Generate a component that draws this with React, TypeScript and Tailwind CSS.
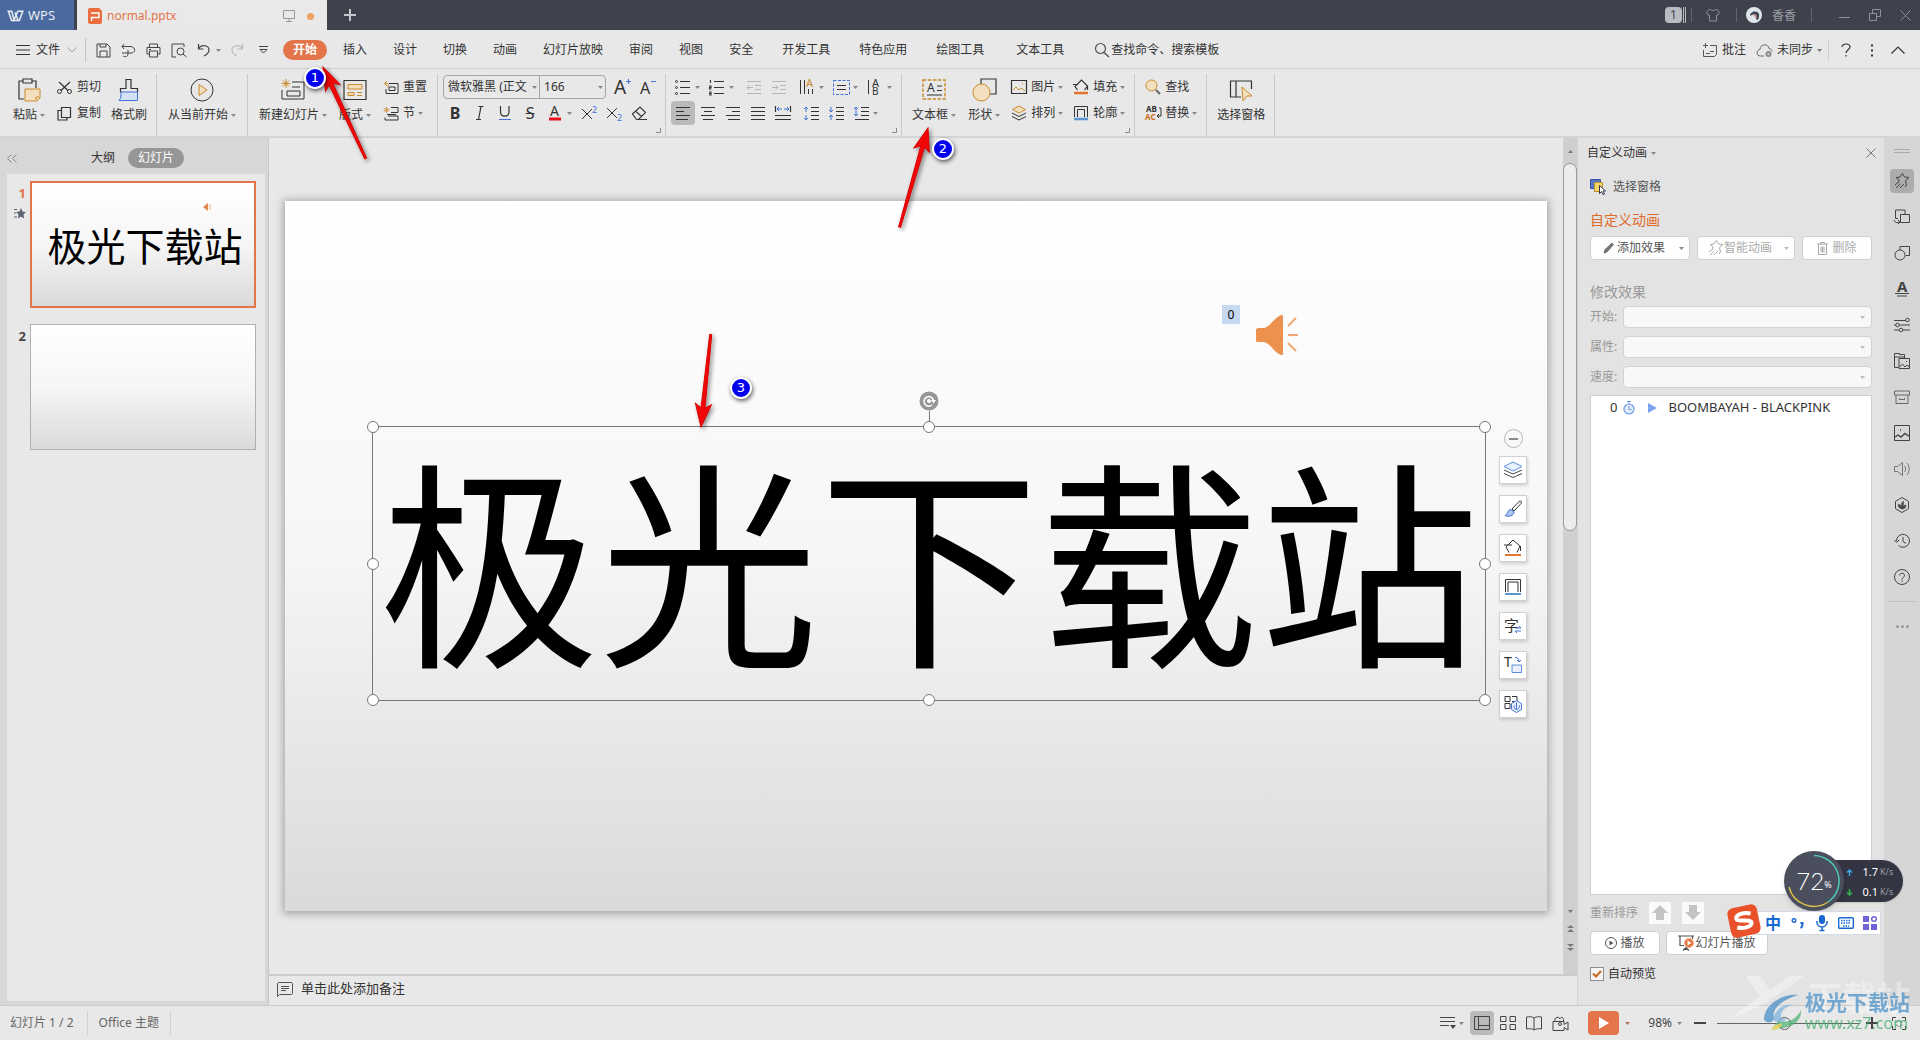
import React from 'react';

type IconProps = { w?: number; h?: number; className?: string; children: React.ReactNode };

const BLUE = '#4472d8';
const GOLD = '#c98a2e';

function Icon({ w = 16, h, className = '', children }: IconProps) {
  const height = h ?? w;
  return (
    <svg
      width={w}
      height={height}
      viewBox={`0 0 ${w} ${height}`}
      fill="none"
      stroke="currentColor"
      className={`shrink-0 overflow-visible ${className}`}
      aria-hidden="true"
    >
      {children}
    </svg>
  );
}

function Caret({ className = 'text-[#888]' }: { className?: string }) {
  return (
    <Icon w={5} h={3} className={className}>
      <path d="M0 0h5L2.500 3z" fill="currentColor" stroke="none" />
    </Icon>
  );
}

// letter that is part of an icon
function Letter({ x, y, size, color = 'currentColor', weight = 400, children }: { x: number; y: number; size: number; color?: string; weight?: number; children: string }) {
  return (
    <text x={x} y={y} fontSize={size} fill={color} fontWeight={weight} stroke="none">
      {children}
    </text>
  );
}

/* ---------- Title bar ---------- */

function TitleBar() {
  return (
    <header className="flex h-[30px] shrink-0 items-center bg-[#3f424d] text-xs text-[#c4c6cc]">
      <button className="flex h-full w-[74px] items-center gap-1 bg-[#4a6a9f] pt-[2px] pl-[7px] text-[13px] text-[#e8edf5]">
        <Icon w={17} h={12}>
          <path d="M.5 1.200h4.300L7 10l3.800-8.800h5L12.300 10.500H7.500" strokeWidth="1.500" />
          <path d="M1.500 1.500l3 9H7M8 2.500l3 7.500" strokeWidth="1.500" />
        </Icon>
        WPS
      </button>
      <div className="ml-[3px] flex h-full w-[250px] items-center bg-[#e9e9e9] pt-[2px] pr-[13px] pl-[11px] text-[#e4744a]">
        <Icon w={14} h={16}>
          <path d="M2 0h9l3 3v11a2 2 0 0 1-2 2H2a2 2 0 0 1-2-2V2a2 2 0 0 1 2-2z" fill="#ea6d3d" stroke="none" />
          <path d="M3 5h8v4.500H3.500V13" stroke="#fff" strokeWidth="1.400" />
        </Icon>
        <span className="ml-[5px] flex-1">normal.pptx</span>
        <Icon w={12} className="text-[#999]">
          <path d="M.5.5h11v8H.5zM6 8.500v3M3 11.500h6" />
        </Icon>
        <span className="ml-3 size-[7px] rounded-full bg-[#f0a060]" />
      </div>
      <button aria-label="新建标签" className="ml-[17px]">
        <Icon w={12}>
          <path d="M6 0v12M0 6h12" strokeWidth="2" />
        </Icon>
      </button>
      <div className="ml-auto flex h-full items-center">
        <span className="flex h-4 w-[17px] items-center justify-center rounded-sm bg-[#b9bbc2] text-[#3f424d]">1</span>
        <span className="ml-px h-4 w-[3px] border-x border-[#b9bbc2]" />
        <span className="ml-[5px] h-[14px] w-px bg-[#62656f]" />
        <button aria-label="皮肤" className="ml-[14px] text-[#8e9098]">
          <Icon w={14}>
            <path d="M4 1 .5 4l1.500 3h1.500v6h7V7H12l1.500-3L10 1C9 3 5 3 4 1z" />
          </Icon>
        </button>
        <span className="ml-4 h-[14px] w-px bg-[#62656f]" />
        <Icon w={16} className="ml-[9px]">
          <circle cx="8" cy="8" r="8" fill="#dfe6ea" stroke="none" />
          <path d="M4 9c0-4 5-6 8-3.500 2 2 1 5 0 7.500-2 0-2-2-2-4-1-2-3-2-6 0z" fill="#3b4250" stroke="none" />
          <path d="M7 8l2-1 2 2-1 2z" fill="#d9958b" stroke="none" />
        </Icon>
        <span className="ml-[10px] pt-[2px] text-[#9c9ea6]">香香</span>
        <span className="ml-[15px] h-[14px] w-px bg-[#62656f]" />
        <button aria-label="最小化" className="ml-[27px] text-[#8e9098]">
          <Icon w={11}>
            <path d="M0 7.500h11" />
          </Icon>
        </button>
        <button aria-label="还原" className="ml-[19px] text-[#8e9098]">
          <Icon w={12}>
            <path d="M.5 4.500h7v7h-7zM3.500 4V.5h8v7H8" />
          </Icon>
        </button>
        <button aria-label="关闭" className="mr-[9px] ml-[19px] text-[#8e9098]">
          <Icon w={11}>
            <path d="M.5.5l10 10M10.500.5l-10 10" />
          </Icon>
        </button>
      </div>
    </header>
  );
}

/* ---------- Menu bar ---------- */

const menuTabs = ['插入', '设计', '切换', '动画', '幻灯片放映', '审阅', '视图', '安全'];
const toolTabs = ['开发工具', '特色应用', '绘图工具'];

function MenuBar() {
  return (
    <nav className="flex h-[39px] shrink-0 items-center border-b border-[#cfcfcf] pt-[2px] whitespace-nowrap">
      <button className="ml-4 flex items-center gap-[6px]">
        <Icon w={14} h={10}>
          <path d="M0 .5h14M0 5h14M0 9.500h14" />
        </Icon>
        文件
        <Icon w={10} h={6} className="ml-px text-[#999]">
          <path d="M.5.5L5 5l4.500-4.500" />
        </Icon>
      </button>
      <span className="ml-2 h-6 w-px bg-[#c4c4c4]" />
      <div className="ml-[10px] flex items-center gap-[10px] text-[#444]">
        <button aria-label="保存">
          <Icon w={15}>
            <path d="M1 1h10l3 3v10H1zM4 1v3h6V1M4 14V8h7v6" />
          </Icon>
        </button>
        <button aria-label="输出为PDF">
          <Icon w={15}>
            <path d="M1 3.500h8c6 0 6 6.500 1 6.500H7M7 7v4c0 3-3 3-5 2M1 10h6M3 1L1 3.500 3 6" />
          </Icon>
        </button>
        <button aria-label="打印">
          <Icon w={15}>
            <path d="M3.500 4V1h8v3M3 11H1V4.500h13V11h-2M3.500 8h8v6h-8zM3 6.500h2" />
          </Icon>
        </button>
        <button aria-label="打印预览">
          <Icon w={16} h={15}>
            <path d="M5 14H1V1h12v3" />
            <circle cx="9.500" cy="8.500" r="3.500" />
            <path d="M12 11l3.500 3" />
          </Icon>
        </button>
        <button aria-label="撤销" className="flex items-center gap-[6px]">
          <Icon w={13} h={14}>
            <path d="M1.500 1v5h5M1.500 6C4 1 12 2 12 7c0 3-3 5-5 6" strokeWidth="1.200" />
          </Icon>
          <Caret />
        </button>
        <button aria-label="恢复" className="text-[#bbb]">
          <Icon w={13} h={14}>
            <path d="M11.500 1v5h-5M11.500 6C9 1 1 2 1 7c0 3 3 5 5 6" strokeWidth="1.200" />
          </Icon>
        </button>
        <button aria-label="自定义快速访问工具栏" className="ml-[5px]">
          <Icon w={9} h={8}>
            <path d="M0 .5h9M1 3.500h7L4.500 7z" />
          </Icon>
        </button>
      </div>
      <button className="ml-[15px] h-5 w-11 rounded-full bg-[#e4754a] font-bold text-white">开始</button>
      <div className="ml-4 flex items-center gap-[26px]">
        {menuTabs.map((t) => (
          <button key={t}>{t}</button>
        ))}
      </div>
      <div className="ml-[29px] flex items-center gap-[29px]">
        {toolTabs.map((t) => (
          <button key={t}>{t}</button>
        ))}
      </div>
      <div className="ml-8 flex items-center gap-[30px]">
        <button>文本工具</button>
        <button className="flex items-center gap-px">
          <Icon w={16} className="text-[#555]">
            <circle cx="6.500" cy="6.500" r="5" strokeWidth="1.200" />
            <path d="M10 10.500l5 4.500" strokeWidth="1.500" />
          </Icon>
          查找命令、搜索模板
        </button>
      </div>
      <div className="ml-auto flex items-center">
        <button className="flex items-center gap-1">
          <Icon w={16} h={15} className="text-[#555]">
            <path d="M3.500 0v5M1 2.500h5M8 2.500h6.500v9l-2 2H1.500V7M4 10.500h4M8 8.500h4" />
          </Icon>
          批注
        </button>
        <button className="ml-[10px] flex items-center gap-[3px]">
          <Icon w={18} h={15} className="text-[#666]">
            <path d="M8 13H4.500C0 13 0 7 4 6.500 4 1 12 0 13 5.500c2 .5 3 1.500 3 3" />
            <circle cx="12.500" cy="11" r="3" fill="#888" stroke="none" />
            <path d="M11.500 10l2 2M13.500 10l-2 2" stroke="#eee" strokeWidth=".8" />
          </Icon>
          未同步
          <Caret className="ml-px text-[#777]" />
        </button>
        <span className="ml-[6px] h-5 w-px bg-[#cfcfcf]" />
        <button aria-label="帮助" className="ml-3">
          <Icon w={10} h={14}>
            <path d="M1 4c0-4 8-4 8 0 0 2.500-4 3-4 6M5 12v1.500" strokeWidth="1.200" />
          </Icon>
        </button>
        <button aria-label="更多" className="ml-5">
          <Icon w={3} h={13}>
            <path d="M0 1.500h2M0 6.500h2M0 11.500h2" strokeWidth="2" />
          </Icon>
        </button>
        <button aria-label="收起功能区" className="mr-[15px] ml-[17px]">
          <Icon w={14} h={8}>
            <path d="M.5 7.500L7 1l6.500 6.500" strokeWidth="1.200" />
          </Icon>
        </button>
      </div>
    </nav>
  );
}

/* ---------- Ribbon ---------- */

function BigButton({ icon, label, caret }: { icon: React.ReactNode; label: string; caret?: boolean }) {
  return (
    <button className="flex flex-col items-center gap-[5px] pt-[4px]">
      <span className="flex h-6 items-center">{icon}</span>
      <span className="flex h-4 items-center gap-[3px]">
        {label}
        {caret && <Caret />}
      </span>
    </button>
  );
}

function SmallButton({ icon, label, caret }: { icon: React.ReactNode; label: string; caret?: boolean }) {
  return (
    <button className="flex h-[26px] items-center gap-[3px]">
      <span className="flex w-[17px] items-center">{icon}</span>
      {label}
      {caret && <Caret />}
    </button>
  );
}

function Tool({ icon, label, caret, pressed }: { icon: React.ReactNode; label: string; caret?: boolean; pressed?: boolean }) {
  return (
    <button aria-label={label} title={label} className={`flex h-6 items-center ${caret ? 'w-[34px]' : 'w-[25px]'}`}>
      <span className={`flex h-6 w-6 shrink-0 items-center justify-center rounded ${pressed ? 'bg-[#bababa]' : ''}`}>{icon}</span>
      {caret && <Caret />}
    </button>
  );
}

function Launcher() {
  return (
    <button aria-label="更多选项" className="absolute right-1 bottom-[3px] text-[#888]">
      <Icon w={5}>
        <path d="M4.500 0v4.500H0" />
      </Icon>
    </button>
  );
}

const group = 'relative flex h-[62px] shrink-0 border-r border-[#c9c9c9]';

const lines = (d: string) => (
  <Icon w={16} h={14}>
    <path d={d} strokeWidth="1.200" />
  </Icon>
);

function Ribbon() {
  return (
    <div className="flex h-[69px] shrink-0 items-start border-b-2 border-[#d4d4d4] pt-[5px] whitespace-nowrap">
      <div className={`${group} pr-[9px] pl-[13px]`}>
        <BigButton
          label="粘贴"
          caret
          icon={
            <Icon w={24}>
              <path d="M6 3H2v18h5M15 3h4v7M6 1h9v4H6z" strokeWidth="1.200" />
              <path d="M8 11h15v9l-3 3H8z" fill="#f3dfbd" stroke={GOLD} />
              <path d="M19 22v-3h3" stroke={GOLD} />
            </Icon>
          }
        />
        <div className="ml-[12px]">
          <SmallButton
            label="剪切"
            icon={
              <Icon w={15} h={13}>
                <path d="M2 1l9 8.500M13 1L4 9.500" strokeWidth="1.200" />
                <circle cx="2.500" cy="10.500" r="2" />
                <circle cx="12.500" cy="10.500" r="2" />
              </Icon>
            }
          />
          <SmallButton
            label="复制"
            icon={
              <Icon w={15}>
                <path d="M4.500 1.500h9v10h-9zM4 4.500H1v9.500h9v-2" strokeWidth="1.200" />
              </Icon>
            }
          />
        </div>
        <div className="ml-[10px] flex">
          <BigButton
            label="格式刷"
            icon={
              <Icon w={22} h={24}>
                <path d="M2.500 14.500v-4H8V1.500h5v9h6.500v4" strokeWidth="1.200" />
                <path d="M3 14h16.500v8.500H1c2-2 2-5 2-8.500z" fill="#d4e0f3" stroke={BLUE} />
              </Icon>
            }
          />
        </div>
      </div>

      <div className={`${group} pr-[11px] pl-[11px]`}>
        <BigButton
          label="从当前开始"
          caret
          icon={
            <Icon w={24}>
              <circle cx="12" cy="12" r="11" />
              <path d="M9 6.500l8 5.500-8 5.500z" fill="#f3dfbd" stroke={GOLD} />
            </Icon>
          }
        />
      </div>

      <div className={`${group} gap-3 pr-[10px] pl-[11px]`}>
        <BigButton
          label="新建幻灯片"
          caret
          icon={
            <Icon w={26} h={24}>
              <path d="M12 4h12v17H2v-9M7 13h13v5H7zM12 9h8" />
              <path d="M6 1v9M1.500 5.500h9M3 2.500l6 6M9 2.500l-6 6" stroke={GOLD} />
            </Icon>
          }
        />
        <BigButton
          label="版式"
          caret
          icon={
            <Icon w={24}>
              <path d="M1 2.500h22v19H1z" strokeWidth="1.200" />
              <path d="M5 6.500h14v4.500H5zM5 14.500h6v3H5zM14 14.500h5M14 17.500h5" stroke={GOLD} fill="#f3dfbd" />
            </Icon>
          }
        />
        <div>
          <SmallButton
            label="重置"
            icon={
              <Icon w={16} h={15}>
                <path d="M6 3.500h9v10H3V9M6 7h6v3.500H6z" />
                <path d="M4 1L1.500 3.500 4 6M2 3.500h2c2 0 2 3 0 4" stroke={GOLD} />
              </Icon>
            }
          />
          <SmallButton
            label="节"
            caret
            icon={
              <Icon w={16} h={15}>
                <path d="M8 1.500h7v5H8M4 8.500h9M2 11.500v2.500h13v-4H5" />
                <path d="M3.500 1v6M.5 4h6M1.500 2l4 4M5.500 2l-4 4" stroke={GOLD} strokeWidth=".8" />
              </Icon>
            }
          />
        </div>
      </div>

      {/* Font */}
      <div className={`${group} w-[228px] flex-col pl-[5px]`}>
        <div className="flex h-[26px] items-center">
          <div className="flex h-6 w-[164px] items-center rounded border border-[#a5a5a5]">
            <select aria-label="字体" className="w-[88px] appearance-none pl-1 outline-none">
              <option>微软雅黑 (正文</option>
            </select>
            <Caret />
            <span className="ml-[2px] h-full w-px bg-[#a5a5a5]" />
            <select aria-label="字号" className="w-[58px] appearance-none pl-1 outline-none">
              <option>166</option>
            </select>
            <Caret />
          </div>
          <button aria-label="增大字号" className="ml-[8px] w-[26px]">
            <Icon w={18}>
              <Letter x={0} y={16} size={19}>A</Letter>
              <path d="M14.500 1v5M12 3.500h5" stroke={BLUE} />
            </Icon>
          </button>
          <button aria-label="减小字号" className="w-[26px]">
            <Icon w={18}>
              <Letter x={1} y={16} size={16}>A</Letter>
              <path d="M12 3.500h5" stroke={BLUE} />
            </Icon>
          </button>
        </div>
        <div className="flex h-[26px] items-center">
          <Tool label="加粗" icon={<span className="text-base leading-4 font-bold">B</span>} />
          <Tool
            label="倾斜"
            icon={
              <Icon w={12} h={14}>
                <path d="M4.500 .5h5M2 13.500h5M7 .5l-2.500 13" strokeWidth="1.200" />
              </Icon>
            }
          />
          <Tool
            label="下划线"
            icon={
              <Icon w={14} h={15}>
                <path d="M2.500 0v6c0 5.500 8.500 5.500 8.500 0V0" strokeWidth="1.200" />
                <path d="M1 13.500h12" stroke={BLUE} />
              </Icon>
            }
          />
          <Tool label="删除线" icon={<span className="text-base leading-4 line-through">S</span>} />
          <Tool
            label="字体颜色"
            caret
            icon={
              <Icon w={14} h={15}>
                <Letter x={2} y={10} size={14}>A</Letter>
                <path d="M1 13h12" stroke="#e8101a" strokeWidth="3" />
              </Icon>
            }
          />
          <Tool
            label="上标"
            icon={
              <Icon w={17} h={15}>
                <path d="M1 3l10 10M11 3L1 13" />
                <Letter x={11} y={7} size={9} color={BLUE}>2</Letter>
              </Icon>
            }
          />
          <Tool
            label="下标"
            icon={
              <Icon w={17} h={15}>
                <path d="M1 2l10 10M11 2L1 12" />
                <Letter x={11} y={15} size={9} color={BLUE}>2</Letter>
              </Icon>
            }
          />
          <Tool
            label="清除格式"
            icon={
              <Icon w={17} h={15}>
                <path d="M1.500 8l7.500-7 5.500 5.500-7 7H5.500zM4.500 5l6 5.500M6 13.500h10" strokeWidth="1.100" />
              </Icon>
            }
          />
        </div>
        <Launcher />
      </div>

      {/* Paragraph */}
      <div className={`${group} w-[236px] flex-col pl-[5px]`}>
        <div className="flex h-[26px] items-center">
          <Tool
            label="项目符号"
            caret
            icon={
              <Icon w={16} h={15}>
                <path d="M5 1.500h10M5 7.500h10M5 13.500h10" strokeWidth="1.200" />
                <circle cx="1.500" cy="1.500" r="1" />
                <circle cx="1.500" cy="7.500" r="1" />
                <circle cx="1.500" cy="13.500" r="1" />
              </Icon>
            }
          />
          <Tool
            label="编号"
            caret
            icon={
              <Icon w={16} h={15}>
                <path d="M5 1.500h10M5 7.500h10M5 13.500h10M1.500 0v3M0 6h2v1.500H.5V9h2M0 12h2v3H0M0 13.500h2" strokeWidth="1.100" />
              </Icon>
            }
          />
          <span className="w-[3px]" />
          <Tool
            label="减少缩进量"
            icon={
              <Icon w={16} h={13} className="text-[#b5b5b5]">
                <path d="M1 .5h14M9 4.500h6M9 8.500h6M1 12.500h14M7 6.500H1M3.500 4L1 6.500 3.500 9" />
              </Icon>
            }
          />
          <Tool
            label="增加缩进量"
            icon={
              <Icon w={16} h={13} className="text-[#b5b5b5]">
                <path d="M1 .5h14M9 4.500h6M9 8.500h6M1 12.500h14M1 6.500h6M4.500 4L7 6.500 4.500 9" />
              </Icon>
            }
          />
          <span className="w-[3px]" />
          <Tool
            label="文字方向"
            caret
            icon={
              <Icon w={16}>
                <path d="M1.500 1v14M5.500 1v14M9.500 10v5M13.500 10v5" />
                <Letter x={7} y={8} size={11} color={GOLD}>A</Letter>
              </Icon>
            }
          />
          <Tool
            label="对齐文本"
            caret
            icon={
              <Icon w={17} h={15}>
                <path d="M.5.5h16v14H.5z" stroke={BLUE} strokeDasharray="3 1.500" />
                <path d="M4 5.500h9M4 9.500h9" strokeWidth="1.200" />
              </Icon>
            }
          />
          <Tool
            label="竖排文字"
            caret
            icon={
              <Icon w={16}>
                <path d="M1.500 1v14" />
                <Letter x={5} y={8} size={11}>A</Letter>
                <Letter x={5} y={16} size={10}>B</Letter>
              </Icon>
            }
          />
        </div>
        <div className="flex h-[26px] items-center">
          <Tool label="左对齐" pressed icon={lines('M1 1.500h14M1 5.500h8M1 9.500h14M1 13.500h12')} />
          <Tool label="居中对齐" icon={lines('M1 1.500h14M4 5.500h8M1 9.500h14M3 13.500h10')} />
          <Tool label="右对齐" icon={lines('M1 1.500h14M7 5.500h8M1 9.500h14M3 13.500h12')} />
          <Tool label="两端对齐" icon={lines('M1 1.500h14M1 5.500h14M1 9.500h14M1 13.500h14')} />
          <Tool
            label="分散对齐"
            icon={
              <Icon w={16} h={14}>
                <path d="M.5 0v6M15.500 0v6M0 9.500h16M0 13.500h16" strokeWidth="1.200" />
                <path d="M2 3h5M4 1L2 3l2 2M14 3H9M12 1l2 2-2 2" stroke={BLUE} />
              </Icon>
            }
          />
          <span className="w-[3px]" />
          <Tool
            label="增大行距"
            icon={
              <Icon w={16} h={15}>
                <path d="M8 1.500h8M8 5.500h8M8 9.500h8M8 13.500h8" strokeWidth="1.200" />
                <path d="M3 1v5M1 3l2-2 2 2M3 9v5M1 12l2 2 2-2" stroke={BLUE} />
              </Icon>
            }
          />
          <Tool
            label="减小行距"
            icon={
              <Icon w={16} h={15}>
                <path d="M8 1.500h8M8 5.500h8M8 9.500h8M8 13.500h8" strokeWidth="1.200" />
                <path d="M3 1v5M1 4l2 2 2-2M3 9v5M1 11l2-2 2 2" stroke={BLUE} />
              </Icon>
            }
          />
          <Tool
            label="行距"
            caret
            icon={
              <Icon w={16} h={15}>
                <path d="M8 1.500h8M8 5.500h8M8 9.500h8M2 13.500h14" strokeWidth="1.200" />
                <path d="M3 1v9M1 3l2-2 2 2M1 8l2 2 2-2" stroke={BLUE} />
              </Icon>
            }
          />
        </div>
        <Launcher />
      </div>

      {/* Insert */}
      <div className={`${group} pr-[9px] pl-[10px]`}>
        <BigButton
          label="文本框"
          caret
          icon={
            <Icon w={24}>
              <path d="M1 2h22v19H1z" stroke={GOLD} strokeWidth="1.400" strokeDasharray="3.500 1.500" />
              <Letter x={5} y={14} size={12}>A</Letter>
              <path d="M15 8h5M15 12.500h5M5 17h15" />
            </Icon>
          }
        />
        <span className="w-3" />
        <BigButton
          label="形状"
          caret
          icon={
            <Icon w={25} h={24}>
              <path d="M9 6V1h15v15h-6" strokeWidth="1.200" />
              <circle cx="9.500" cy="14.500" r="8.500" fill="#f3dfbd" stroke={GOLD} />
            </Icon>
          }
        />
        <div className="ml-[11px]">
          <SmallButton
            label="图片"
            caret
            icon={
              <Icon w={16} h={14}>
                <path d="M.5.5h15v13H.5z" strokeWidth="1.200" />
                <path d="M2 10l3-3 3 3 2-2 4 3M11 4h1" stroke={GOLD} />
              </Icon>
            }
          />
          <SmallButton
            label="排列"
            caret
            icon={
              <Icon w={16}>
                <path d="M1.500 4.500L8 1l6.500 3.500L8 8z" fill="#f3dfbd" stroke={GOLD} />
                <path d="M1 8l7 3.500L15 8M1 11.500L8 15l7-3.500" />
              </Icon>
            }
          />
        </div>
        <div className="ml-[10px]">
          <SmallButton
            label="填充"
            caret
            icon={
              <Icon w={16}>
                <path d="M4.500 11L2 7.500 8.500 1l6 6-3 4M0 5.500h5M14.500 6.500v4.500" strokeWidth="1.200" />
                <path d="M1 14h14" stroke="#e0762f" strokeWidth="2.500" />
              </Icon>
            }
          />
          <SmallButton
            label="轮廓"
            caret
            icon={
              <Icon w={16}>
                <path d="M1.500 12V1.500h13V12M4.500 12V4.500h7V12" />
                <path d="M1 14h14" stroke="#5b97cf" strokeWidth="2.500" />
              </Icon>
            }
          />
        </div>
        <Launcher />
      </div>

      <div className={`${group} pr-[9px] pl-[10px]`}>
        <div>
          <SmallButton
            label="查找"
            icon={
              <Icon w={16}>
                <circle cx="6.500" cy="6.500" r="5.500" fill="#f3dfbd" stroke={GOLD} />
                <path d="M11 11l4 4" stroke="#666" strokeWidth="2" />
              </Icon>
            }
          />
          <SmallButton
            label="替换"
            caret
            icon={
              <Icon w={17} h={16}>
                <Letter x={1} y={7} size={8} weight={700}>AB</Letter>
                <Letter x={0} y={15} size={8} weight={700} color="#cf6f1c">AC</Letter>
                <path d="M14 3h2v8h-4M14 9l-2 2 2 2" />
              </Icon>
            }
          />
        </div>
      </div>

      <div className={`${group} pr-[9px] pl-[10px]`}>
        <BigButton
          label="选择窗格"
          icon={
            <Icon w={24}>
              <path d="M12 19H1.500V3h21v8M7 3v16" strokeWidth="1.200" />
              <path d="M13 9l10 9h-5l-4 5z" fill="#f3dfbd" stroke={GOLD} />
            </Icon>
          }
        />
      </div>
    </div>
  );
}

/* ---------- Slide list ---------- */

const slideBg = 'bg-linear-to-b from-white via-[#f6f6f6] to-[#dadada]';

function SlidePanel() {
  return (
    <aside className="flex w-[269px] shrink-0 flex-col border-r border-[#c6c6c6] bg-[#d7d7d7] pr-[3px] pb-1 pl-[7px]">
      <div className="flex h-9 items-center pt-1">
        <button aria-label="收起" className="text-[#888]">
          <Icon w={10} h={9}>
            <path d="M4.500.5l-4 4 4 4M9.500.5l-4 4 4 4" />
          </Icon>
        </button>
        <button className="ml-[74px]">大纲</button>
        <button className="ml-[13px] h-5 w-14 rounded-full bg-[#969696] text-white">幻灯片</button>
      </div>
      <ol className="flex flex-1 flex-col gap-4 bg-[#e8e8e8] pt-[7px] pr-[9px] text-[13px]">
        <li className="flex">
          <div className="flex w-[23px] flex-col items-end gap-[6px] pt-1 pr-1 font-bold text-[#e4754a]">
            1
            <Icon w={12} h={11} className="text-[#5b6370]">
              <path d="M7 0l1.500 3.500 3.500.5-2.500 2.500.5 4-3-2-3 2 .5-4L2 4l3.500-.5z" fill="currentColor" stroke="none" />
              <path d="M0 1.500h3M0 5h2M0 9h3" />
            </Icon>
          </div>
          <button className={`relative h-[127px] flex-1 border-2 border-[#e4754a] ${slideBg} text-[39px] leading-[126px] whitespace-nowrap text-black`}>
            <span className="pl-1">极光下载站</span>
            <Icon w={9} h={8} className="absolute top-5 right-[42px]">
              <path d="M0 4l5-4v8z" fill="#e08a50" stroke="none" />
              <path d="M6.500 1v6M8 2v4" stroke="#f3c8a4" />
            </Icon>
          </button>
        </li>
        <li className="flex">
          <div className="w-[23px] pt-1 pr-1 text-right font-bold text-[#444]">2</div>
          <button aria-label="幻灯片 2" className={`h-[126px] flex-1 border border-[#b0b0b0] ${slideBg}`} />
        </li>
      </ol>
    </aside>
  );
}

/* ---------- Slide canvas ---------- */

function ShapeToolbar() {
  const box = 'flex size-7 items-center justify-center border border-[#d0d0d0] bg-white shadow-[1px_2px_3px_rgba(0,0,0,0.15)]';
  return (
    <div className="absolute top-[228px] left-[1214px] flex flex-col items-center gap-[11px]">
      <button aria-label="收起工具" className="-mb-[3px] flex size-[19px] items-center justify-center rounded-full border border-[#b5b5b5] bg-[#f8f8f8]">
        <span className="h-[2px] w-[9px] bg-[#888]" />
      </button>
      <button aria-label="图层" className={box}>
        <Icon w={18}>
          <path d="M0 9l9 4 9-4M0 12.500l9 4 9-4" strokeWidth=".9" />
          <path d="M0 5.500l9-4.500 9 4.500L9 10z" fill="#eaf1fc" stroke="#5b8fdc" />
        </Icon>
      </button>
      <button aria-label="样式" className={box}>
        <Icon w={18}>
          <path d="M8 9l7-7.500c2-1 3 0 2 2L10 11z" />
          <path d="M7 9.500c-4 0-2 4-6 6 4 2 9 0 9-3.500z" fill="#a9c5f0" stroke={BLUE} />
        </Icon>
      </button>
      <button aria-label="形状填充" className={box}>
        <Icon w={18}>
          <path d="M5 13.500L2 8l7-7 7 6-3 6.500M0 6h8M16.500 7v5" />
          <path d="M1 16h16" stroke="#e0762f" strokeWidth="2" />
        </Icon>
      </button>
      <button aria-label="形状轮廓" className={box}>
        <Icon w={18}>
          <path d="M1.500 14V1.500h15V14M4 14V4h10v10" />
          <path d="M1 16h16" stroke="#5b97cf" strokeWidth="2" />
        </Icon>
      </button>
      <button aria-label="更改字体" className={box}>
        <Icon w={18}>
          <Letter x={0} y={14} size={15}>字</Letter>
          <path d="M11 11h6l-2-2M17 14h-6l2 2" stroke={BLUE} />
        </Icon>
      </button>
      <button aria-label="文字排版" className={box}>
        <Icon w={18}>
          <Letter x={0} y={11} size={14}>T</Letter>
          <path d="M8 9h9.500v7.500H8z" fill="#eaf1fc" stroke="#5b8fdc" />
          <path d="M11 1.500c3 0 4 1 4 4M13 4l2 2 2-2" stroke={BLUE} />
        </Icon>
      </button>
      <button aria-label="更多功能" className={box}>
        <Icon w={18}>
          <path d="M1 1.500h5v5H1zM8 1.500h5v5H8M1 8.500h5v5H1z" />
          <path d="M12.500 5.500l5 3v6l-5 3-5-3v-6z" fill="#eaf1fc" stroke={BLUE} />
          <path d="M12.500 7.500v7M10 10.500c0 3 1 4 2.500 4s3-1 3-4" stroke={BLUE} />
        </Icon>
      </button>
    </div>
  );
}

const handles = [
  '-top-[6px] -left-[6px]',
  '-top-[6px] left-[calc(50%-6px)]',
  '-top-[6px] -right-[6px]',
  'top-[calc(50%-6px)] -left-[6px]',
  'top-[calc(50%-6px)] -right-[6px]',
  '-bottom-[6px] -left-[6px]',
  '-bottom-[6px] left-[calc(50%-6px)]',
  '-bottom-[6px] -right-[6px]',
];

function Canvas() {
  return (
    <main className="flex min-w-0 flex-1 flex-col">
      <div className="flex min-h-0 flex-1">
        <div className="min-w-0 flex-1 overflow-hidden px-4 pt-[63px]">
          <section className={`relative aspect-video w-full ${slideBg} shadow-[0_1px_8px_2px_rgba(0,0,0,0.28)]`}>
            <span className="absolute top-[104px] left-[937px] flex h-[19px] w-[18px] items-center justify-center bg-[#c5d9f1] text-black">0</span>
            <Icon w={42} className="absolute top-[113px] left-[971px]">
              <path d="M2 14h6C15 12 18 4 25 1c1 0 2 0 2 1v38c0 1-1 1-2 1C18 38 15 30 8 28H2c-1 0-2 0-2-2V16c0-1 1-2 2-2z" fill="#ec914e" stroke="none" />
              <path d="M32 12l8-8M32 21h10M32 29l8 8" stroke="#eea873" strokeWidth="2" />
            </Icon>
            <div className="absolute top-[225px] left-[87px] h-[275px] w-[1114px] border border-[#777]">
              <p className="text-center text-[220px] leading-[278px] whitespace-nowrap text-black">极光下载站</p>
              <span className="absolute -top-4 left-1/2 h-4 w-px bg-[#777]" />
              <Icon w={20} className="absolute -top-9 left-[calc(50%-10px)]">
                <circle cx="10" cy="10" r="9.500" fill="#969696" stroke="none" />
                <path d="M14.500 9.500A4.800 4.800 0 1 0 13 14" stroke="#fff" strokeWidth="1.500" />
                <circle cx="10" cy="10" r="2" fill="#fff" stroke="none" />
                <path d="M12 9h5l-2.500 3.500z" fill="#fff" stroke="none" />
              </Icon>
              {handles.map((pos) => (
                <span key={pos} className={`absolute size-3 rounded-full border border-[#777] bg-white ${pos}`} />
              ))}
            </div>
            <ShapeToolbar />
          </section>
        </div>
        <div className="flex w-[14px] shrink-0 flex-col items-center bg-[#cfcfcf] pt-3 pb-[23px] text-[#777]">
          <Icon w={5} h={3}>
            <path d="M0 3h5L2.500 0z" fill="currentColor" stroke="none" />
          </Icon>
          <div className="mt-[10px] h-[368px] w-full rounded-full border border-[#999] bg-[#ececec]" />
          <div className="mt-auto flex flex-col items-center gap-[12px]">
            <Caret className="text-[#777]" />
            <Icon w={7} h={7}>
              <path d="M0 3h7L3.500 0zM0 7h7L3.500 4z" fill="currentColor" stroke="none" />
            </Icon>
            <Icon w={7} h={7}>
              <path d="M0 0h7L3.500 3zM0 4h7L3.500 7z" fill="currentColor" stroke="none" />
            </Icon>
          </div>
        </div>
      </div>
      <label className="flex h-[31px] shrink-0 items-center gap-2 border-t-2 border-[#cccccc] pb-[3px] pl-2 text-[13px]">
        <Icon w={16} h={15} className="text-[#555]">
          <path d="M.5 14.500V2c0-1 .5-1.500 1.500-1.500h12c1 0 1.500.5 1.500 1.500v9c0 1-.5 1.500-1.500 1.500H2.500zM4 4.500h8M4 6.500h8M4 8.500h5" />
        </Icon>
        <input aria-label="备注" placeholder="单击此处添加备注" className="flex-1 outline-none placeholder:text-[#333]" />
      </label>
    </main>
  );
}

/* ---------- Custom animation pane ---------- */

const effectFields = ['开始:', '属性:', '速度:'];

function StarTrail() {
  return (
    <Icon>
      <path d="M4.500 10l.5-3-3-2.500 4-.5L8.500.5 10.500 4l4.500.5-3.500 3 1 4.500M1 12l3-2.500M2 15l4.500-4M6 15l4-4M11 14l1.500-2" />
    </Icon>
  );
}

function AnimationPane() {
  const btn = 'flex h-6 items-center rounded-sm border border-[#cfcfcf] bg-white';
  return (
    <aside className="flex w-[307px] shrink-0 flex-col border-l border-[#d4d4d4] bg-[#e3e3e3] pr-3 pl-3 text-[#555]">
      <div className="-mx-1 flex h-[30px] items-center">
        <button className="ml-px flex items-center gap-1 text-[#333]">
          自定义动画
          <Caret />
        </button>
        <button aria-label="关闭窗格" className="ml-auto text-[#777]">
          <Icon w={10}>
            <path d="M.5.5l9 9M9.500.5l-9 9" />
          </Icon>
        </button>
      </div>
      <button className="mt-[10px] flex h-[18px] items-center gap-[7px]">
        <Icon w={16}>
          <path d="M.5.5h10v9H.5z" fill="#5978c4" stroke="#3a549c" />
          <path d="M4.500 3.500h8v9h-8z" fill="#f5d667" stroke="#b8912d" />
          <path d="M9.500 6.500v8l2-2 1.500 3 1.500-.5-1.500-3h2.500z" fill="#fff" stroke="#335" />
        </Icon>
        选择窗格
      </button>
      <h2 className="mt-[14px] text-sm leading-5 text-[#e06a2c]">自定义动画</h2>
      <div className="mt-[6px] flex gap-[7px]">
        <button className={`${btn} flex-1 justify-between pr-[5px] pl-3`}>
          <span className="flex items-center gap-[3px]">
            <Icon w={11} h={12}>
              <path d="M1 11l1-3.500L9 1l1.500 1.500L4 10z" fill="#777" stroke="#777" />
            </Icon>
            添加效果
          </span>
          <Caret />
        </button>
        <button disabled className={`${btn} flex-1 justify-between pr-[5px] pl-[10px] text-[#aaa]`}>
          <span className="flex items-center">
            <StarTrail />
            智能动画
          </span>
          <Caret className="text-[#bbb]" />
        </button>
        <button disabled className={`${btn} w-[70px] justify-center gap-1 text-[#aaa]`}>
          <Icon w={11} h={13}>
            <path d="M0 2h11M3.500 2V.5h4V2M1.500 2v10.500h8V2M4 4.500v6M5.500 4.500v6M7 4.500v6" />
          </Icon>
          删除
        </button>
      </div>
      <h2 className="mt-[22px] text-sm leading-5 text-[#999]">修改效果</h2>
      {effectFields.map((name) => (
        <label key={name} className="flex h-[30px] items-center gap-[3px] text-[#999]">
          <span className="w-[30px]">{name}</span>
          <span className="flex h-[22px] flex-1 items-center rounded border border-[#d2d2d2] bg-[#f8f8f8] pr-[6px]">
            <select disabled className="flex-1 appearance-none" />
            <Caret className="text-[#bbb]" />
          </span>
        </label>
      ))}
      <ul className="mt-[3px] min-h-0 flex-1 border border-[#cfcfcf] bg-white">
        <li className="flex h-6 items-center pl-[19px] text-[13px] text-[#333]">
          0
          <Icon w={12} h={14} className="ml-[6px] text-[#6f9be6]">
            <circle cx="6" cy="8" r="5" fill="#e2ecfb" strokeWidth="1.200" />
            <path d="M4 .5h4M6 1v2M6 5v3.500h2.500" />
          </Icon>
          <Icon w={9} h={10} className="mr-[11px] ml-[13px]">
            <path d="M0 0l9 5-9 5z" fill="#7ba4ea" stroke="none" />
          </Icon>
          BOOMBAYAH - BLACKPINK
        </li>
      </ul>
      <div className="mt-[7px] flex h-[22px] items-center text-[#999]">
        重新排序
        <button disabled aria-label="上移" className="ml-[11px] flex size-[22px] items-center justify-center bg-[#fafafa]">
          <Icon w={16}>
            <path d="M8 0l8 8h-4v7H4V8H0z" fill="#c3c3c3" stroke="none" />
          </Icon>
        </button>
        <button disabled aria-label="下移" className="ml-[11px] flex size-[22px] items-center justify-center bg-[#fafafa]">
          <Icon w={16}>
            <path d="M8 15l8-8h-4V0H4v7H0z" fill="#c3c3c3" stroke="none" />
          </Icon>
        </button>
      </div>
      <div className="mt-[7px] flex gap-[6px]">
        <button className={`${btn} w-[70px] justify-center gap-[3px]`}>
          <Icon w={12}>
            <circle cx="6" cy="6" r="5.500" />
            <path d="M4.500 3.500l4 2.500-4 2.500z" fill="currentColor" stroke="none" />
          </Icon>
          播放
        </button>
        <button className={`${btn} w-[102px] justify-center`}>
          <Icon w={17} h={16}>
            <path d="M0 1h16M2 1v9.500h4M14.500 1v3M5 15.500l3-3 3 3M8 12v3" strokeWidth="1.200" />
            <circle cx="11" cy="8" r="4.500" fill="#e8713c" stroke="#f3b394" />
            <path d="M9.500 5.500l4 2.500-4 2.500z" fill="#fff" stroke="none" />
          </Icon>
          幻灯片播放
        </button>
      </div>
      <label className="mt-[8px] mb-5 flex h-[22px] items-center gap-1 text-[#333]">
        <input type="checkbox" defaultChecked className="peer sr-only" />
        <span className="flex size-[14px] items-center justify-center border border-[#8f8f8f] bg-[#f4f4f4] text-[#c8691f]">
          <Icon w={10} h={8}>
            <path d="M1 3.500l3 3L9 1" strokeWidth="2" />
          </Icon>
        </span>
        自动预览
      </label>
    </aside>
  );
}

/* ---------- Right icon strip ---------- */

const sideTools = [
  { label: '自定义动画', active: true, icon: <StarTrail /> },
  { label: '幻灯片切换', icon: <Icon><path d="M6.500 5.500h9v8h-9zM11 5V1H1.500v8.500H4M0 11c1 3 3 3 6 2M4 11l2 2-2 2" /></Icon> },
  { label: '形状', icon: <Icon><path d="M6 5V1.500h9.500v9H12" /><circle cx="6" cy="10" r="5" /></Icon> },
  { label: '艺术字', icon: <Icon><Letter x={3} y={11} size={15} weight={700}>A</Letter><path d="M1 12.500h14M3 15h10" /></Icon> },
  { label: '对象属性', icon: <Icon><path d="M0 3.500h12M0 8h1.500M5.500 8H16M0 13h5M9 13h7" /><circle cx="13.500" cy="3" r="1.800" /><circle cx="3.500" cy="8" r="1.800" /><circle cx="7" cy="13" r="1.800" /></Icon> },
  { label: '图片库', icon: <Icon><path d="M4.500 14.500H.5V.5h5v1h5v4M.5 4h10M5 5.500h10.500v10H5zM5.500 14l3-3 2.500 3 2-2 2.500 2M12 8.500h1" /></Icon> },
  { label: '素材', icon: <Icon className="text-[#666]"><path d="M.5 2h15v4H.5zM2 6v8.500h12V6M5.500 9v1.500h5V9" /></Icon> },
  { label: '图片', icon: <Icon><path d="M.5.5h15v15H.5z" /><path d="M1 12l3-2 3 2 4-3.500 4.500 3M6 5h1" strokeWidth="1.400" /></Icon> },
  { label: '声音', icon: <Icon className="text-[#777]"><path d="M.5 5.500h3l5-4v13l-5-4h-3zM10.500 5c1.500 2 1.500 4 0 6M13 2c3 4 3 8 0 12" /></Icon> },
  { label: '推荐', icon: <Icon><path d="M8 .5l6.500 3.800v7.400L8 15.500l-6.500-3.800V4.300z" /><path d="M8 12c-4-1-4-3-3.500-5C7 8 7 9 8 12c-1-4-1-6 1.500-8 0 4 0 5-1.500 8 1-3 2-4 4-4 0 3-2 4-4 4z" fill="currentColor" strokeWidth=".5" /></Icon> },
  { label: '历史版本', icon: <Icon><path d="M2.500 8a6.500 6.500 0 1 1 2 4.500M.5 7l2 2.500L5 7M9 4v4.500l3 2" /></Icon> },
  { label: '帮助', icon: <Icon><circle cx="8" cy="8" r="7.500" /><path d="M5.500 6.500c0-3 5-3 5 0 0 2-2.500 2-2.500 4M8 11.500V13" /></Icon> },
];

function SideStrip() {
  return (
    <div className="flex w-9 shrink-0 flex-col items-center bg-[#d6d6d6] pt-[11px] text-[#444]">
      <span className="h-1 w-4 border-y border-[#aaa]" />
      <div className="mt-4 flex flex-col gap-3">
        {sideTools.map((t) => (
          <button key={t.label} aria-label={t.label} className={`flex size-6 items-center justify-center rounded ${t.active ? 'bg-[#acacac]' : ''}`}>
            {t.icon}
          </button>
        ))}
      </div>
      <span className="mt-3 h-px w-7 bg-[#c2c2c2]" />
      <button aria-label="更多" className="mt-[23px] flex gap-[2px]">
        {[0, 1, 2].map((n) => (
          <span key={n} className="size-[3px] rounded-full bg-[#999]" />
        ))}
      </button>
    </div>
  );
}

/* ---------- Status bar ---------- */

function StatusBar() {
  return (
    <footer className="flex h-[35px] shrink-0 items-center border-t border-[#cccccc] text-[#666]">
      <span className="ml-[10px]">幻灯片 1 / 2</span>
      <span className="ml-[13px] h-6 w-px bg-[#d2d2d2]" />
      <span className="ml-[11px]">Office 主题</span>
      <span className="ml-[11px] h-6 w-px bg-[#d2d2d2]" />
      <div className="ml-auto flex items-center text-[#444]">
        <button aria-label="备注" className="flex items-center gap-[3px]">
          <Icon w={16} h={14}>
            <path d="M0 1.500h15M0 5.500h15M0 9.500h9" />
            <path d="M10 9h6l-3 4z" fill="currentColor" stroke="none" />
          </Icon>
          <Caret />
        </button>
        <button aria-label="普通视图" className="ml-[6px] flex size-6 items-center justify-center rounded bg-[#bababa]">
          <Icon w={16} h={14}>
            <path d="M.5.5h15v13H.5zM4.500.5v13M4.500 9.500h11" />
          </Icon>
        </button>
        <button aria-label="幻灯片浏览" className="ml-[6px]">
          <Icon w={16} h={14}>
            <path d="M.5.5h5.500v5H.5zM10 .5h5.500v5H10zM.5 8.500h5.500v5H.5zM10 8.500h5.500v5H10z" />
          </Icon>
        </button>
        <button aria-label="阅读视图" className="ml-[10px]">
          <Icon w={16} h={15}>
            <path d="M8 2C6 .5 3 .5.5 1v12c2.500-.5 5.500-.5 7.500 1 2-1.500 5-1.500 7.500-1V1C13 .5 10 .5 8 2zM8 2v12" />
          </Icon>
        </button>
        <button aria-label="录制" className="ml-[10px]">
          <Icon w={17} h={15}>
            <path d="M1 5.500h11v3l4-2.500v8l-4-2.500v3H1zM3 5C2 1 7 0 8 3c1-3 4-2 3.500 2" />
            <circle cx="8" cy="8" r="1.500" />
          </Icon>
        </button>
        <button aria-label="从当前幻灯片播放" className="ml-[19px] flex h-6 w-[31px] items-center justify-center rounded bg-[#e4754a]">
          <Icon w={10} h={12}>
            <path d="M0 0l10 6-10 6z" fill="#fff" stroke="none" />
          </Icon>
        </button>
        <Caret className="ml-[6px] text-[#b5705a]" />
        <button className="ml-[18px] flex items-center gap-[5px]">
          98%
          <Caret />
        </button>
        <button aria-label="缩小" className="ml-3">
          <Icon w={12} h={2}>
            <path d="M0 1h12" strokeWidth="2" />
          </Icon>
        </button>
        <input
          type="range"
          aria-label="显示比例"
          defaultValue={47}
          className="ml-[11px] h-3 w-[143px] appearance-none bg-transparent [&::-webkit-slider-runnable-track]:h-px [&::-webkit-slider-runnable-track]:bg-[#666] [&::-webkit-slider-thumb]:-mt-[6px] [&::-webkit-slider-thumb]:size-[13px] [&::-webkit-slider-thumb]:appearance-none [&::-webkit-slider-thumb]:rounded-full [&::-webkit-slider-thumb]:border [&::-webkit-slider-thumb]:border-[#555] [&::-webkit-slider-thumb]:bg-[#f2f2f2]"
        />
        <button aria-label="放大" className="ml-[6px]">
          <Icon w={12}>
            <path d="M6 0v12M0 6h12" strokeWidth="2" />
          </Icon>
        </button>
        <button aria-label="适应窗口" className="mr-[14px] ml-[14px]">
          <Icon w={14} h={13}>
            <path d="M.5 4V.5H4M10 .5h3.500V4M13.500 9v3.500H10M4 12.500H.5V9M4 5.500l2-2M10 5.500l-2-2M4 7.500l2 2M10 7.500l-2 2" />
          </Icon>
        </button>
      </div>
    </footer>
  );
}

/* ---------- Things floating over the window ---------- */

const speeds = [
  { value: '1.7', color: 'text-[#3fa4e8]', arrow: 'M3.500 7V1M1 3.500L3.500 1 6 3.500' },
  { value: '0.1', color: 'text-[#35b24a]', arrow: 'M3.500 0v6M1 3.500L3.500 6 6 3.500' },
];

function CpuWidget() {
  return (
    <div className="absolute right-[17px] bottom-[129px] flex h-[60px] w-[172px] items-center">
      <div className="ml-auto flex h-[42px] w-[74px] flex-col rounded-r-full bg-[#333642] pt-[2px] pl-[17px] text-[11px] text-white shadow">
        {speeds.map((s) => (
          <span key={s.value} className="flex h-5 items-center">
            <Icon w={7} h={7} className={s.color}>
              <path d={s.arrow} strokeWidth="1.500" />
            </Icon>
            <span className="w-[25px] text-right">{s.value}</span>
            <span className="pl-[2px] text-[9px] text-[#9a9ca6]">K/s</span>
          </span>
        ))}
      </div>
      <div className="absolute right-[59px] flex size-[60px] items-center justify-center rounded-full bg-[#4b4e5c] text-2xl text-white shadow-md">
        <span className="font-['Lato'] font-light">72</span>
        <span className="pt-2 text-[9px]">%</span>
        <Icon w={60} className="absolute inset-0">
          <path d="M30 4.500a25.500 25.500 0 0 1 14 46.500" stroke="#4cc9b0" strokeWidth="1.500" />
          <path d="M44 51A25.500 25.500 0 0 1 5 36" stroke="#d8c04a" strokeWidth="1.500" />
        </Icon>
      </div>
    </div>
  );
}

function ImeBar() {
  return (
    <div className="absolute right-[39px] bottom-[105px] flex h-6 w-[148px] items-center border border-[#d5dbe6] bg-white pl-[31px] text-[#1769d2]">
      <span className="absolute -top-[6px] -left-[5px] flex size-[30px] -rotate-12 items-center justify-center rounded-md bg-[#e9512b]">
        <Icon w={22} h={20}>
          <path d="M19 4C13 1 4 2 4 6s14 3 14 7-9 5-15 2" stroke="#fff" strokeWidth="4" />
        </Icon>
      </span>
      <span className="text-base leading-4 font-bold">中</span>
      <Icon w={13} h={12} className="ml-[10px]">
        <circle cx="3" cy="3.500" r="1.800" strokeWidth="1.400" />
        <path d="M9.500 6h2v2c0 1.500-1 2.500-2 3" strokeWidth="2" />
      </Icon>
      <Icon w={12} h={16} className="ml-3">
        <rect x="3" y="0" width="6" height="9" rx="3" fill="currentColor" stroke="none" />
        <path d="M.8 6c0 8 10.400 8 10.400 0M6 12v4M3.500 15.500h5" strokeWidth="1.500" />
      </Icon>
      <Icon w={16} h={12} className="ml-[10px]">
        <rect x=".7" y=".7" width="14.600" height="10.600" rx="1" strokeWidth="1.400" />
        <path d="M3 3.500h10M3 6h10M5 9h6" strokeDasharray="1.500 1" strokeWidth="1.500" />
      </Icon>
      <Icon w={14} className="ml-[9px] text-[#7063d8]">
        <path d="M0 0h6v6H0zM0 8h6v6H0zM8 8h6v6H8z" fill="currentColor" stroke="none" />
        <circle cx="11" cy="3" r="2.300" strokeWidth="1.500" />
      </Icon>
    </div>
  );
}

function Watermark() {
  return (
    <div className="pointer-events-none absolute right-[10px] bottom-[8px] flex items-center gap-[3px] opacity-75">
      <div className="absolute right-0 bottom-3 flex items-center gap-1 text-white/50">
        <Icon w={76} h={44}>
          <path d="M18 0h14l10 14L62 0h14L36 28 0 44l32-24z" fill="currentColor" stroke="none" />
        </Icon>
        <span className="text-[34px] leading-[44px] font-bold whitespace-nowrap">下载站</span>
      </div>
      <svg width="40" height="38" viewBox="0 0 42 40" className="relative" aria-hidden="true">
        <path d="M38 2C22 0 2 12 2 28c3 5 9 3 11-1C9 18 19 8 38 2z" fill="#4a90c8" />
        <path d="M12 27c1-10 12-17 23-14-9 0-15 5-15 11 0 3 3 4 6 2-2 6-12 7-14 1z" fill="#7fb5dc" />
        <path d="M41 18c1 12-10 19-22 19-5 0-6 1-8 1 3-7 7-8 12-8 8 0 14-4 18-12z" fill="#52b376" />
        <path d="M10 39c2-5 6-7 11-7-1 4-4 7-11 7z" fill="#e5d046" />
      </svg>
      <div className="relative flex flex-col">
        <span className="text-[21px] leading-[23px] font-bold text-[#4f95cb]">极光下载站</span>
        <span className="text-base leading-[18px] text-[#3fae6a]">www.xz7.com</span>
      </div>
    </div>
  );
}

const arrows = [
  { x: 323, y: 67, length: 101, angle: 65 },
  { x: 928, y: 128, length: 103, angle: 106 },
  { x: 701, y: 427, length: 93, angle: -84 },
];

const badges = [
  { n: 1, x: 315, y: 78 },
  { n: 2, x: 943, y: 149 },
  { n: 3, x: 741, y: 388 },
];

function Annotations() {
  return (
    <div className="pointer-events-none absolute inset-0">
      <svg className="h-full w-full" aria-hidden="true">
        {arrows.map((a) => (
          <g key={a.x} transform={`translate(${a.x} ${a.y})`} style={{ filter: 'drop-shadow(2px 2px 2px rgba(0,0,0,0.45))' }}>
            <path d={`M0 0L23 -8L19 -2L${a.length} -1V1L19 2L23 8Z`} fill="#f00808" stroke="#d00" strokeWidth="1" transform={`rotate(${a.angle})`} />
          </g>
        ))}
      </svg>
      {badges.map((b) => (
        <span
          key={b.n}
          style={{ left: b.x - 11, top: b.y - 11 }}
          className="absolute flex size-[22px] items-center justify-center rounded-full border-2 border-white bg-[#0000ee] font-['DejaVu_Sans'] text-[13px] text-white shadow-[1px_2px_4px_rgba(0,0,0,0.6)]"
        >
          {b.n}
        </span>
      ))}
    </div>
  );
}

export default function App() {
  return (
    <div className="relative flex h-screen flex-col overflow-hidden bg-[#e8e8e8] font-['Noto_Sans','Noto_Sans_CJK_SC',sans-serif] text-xs text-[#333]">
      <TitleBar />
      <MenuBar />
      <Ribbon />
      <div className="flex min-h-0 flex-1">
        <SlidePanel />
        <Canvas />
        <AnimationPane />
        <SideStrip />
      </div>
      <StatusBar />
      <CpuWidget />
      <ImeBar />
      <Watermark />
      <Annotations />
    </div>
  );
}
